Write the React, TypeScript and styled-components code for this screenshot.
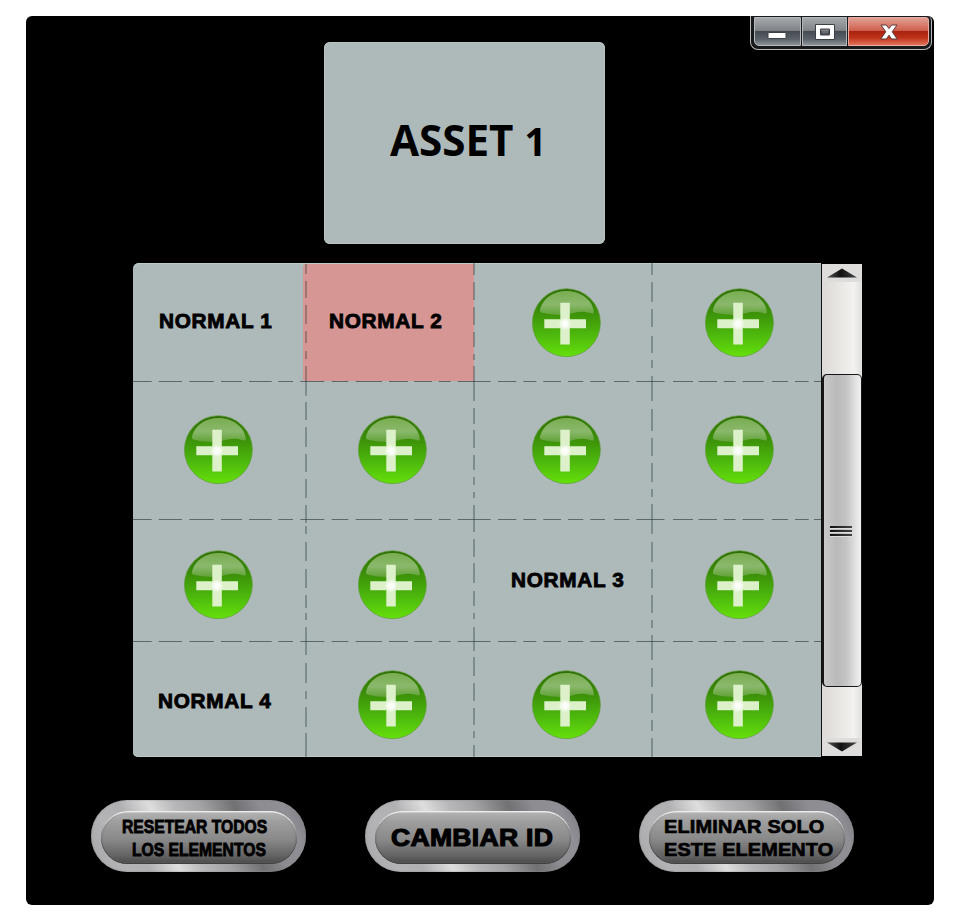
import React from "react";
import styled, { createGlobalStyle } from "styled-components";

const GlobalStyle = createGlobalStyle`
  *, *::before, *::after { box-sizing: border-box; }
  body { margin: 0; background: #fff; font-family: "Liberation Sans", Arial, sans-serif; }
  button { border: 0; padding: 0; margin: 0; background: none; font: inherit; color: inherit; cursor: pointer; }
`;

const PANEL = "#aeb9ba";

const Page = styled.main`
  width: 960px;
  height: 920px;
  padding: 16px 0 0 26px;
  overflow: hidden;
`;

const Window = styled.section`
  width: 908px;
  height: 889px;
  background: #000;
  border-radius: 6px;
  display: flex;
  flex-direction: column;
`;

const Header = styled.header`
  display: grid;
  grid-template-columns: 298px 281px 1fr;
  height: 227px;
`;

const AssetCard = styled.div`
  grid-column: 2;
  margin-top: 26px;
  height: 202px;
  border-radius: 6px;
  background: ${PANEL};
  box-shadow: inset 0 0 1px 1px #bcc4c4;
  padding: 68px 0 0 66px;
`;

const AssetTitle = styled.h1`
  margin: 0;
  width: max-content;
  font: 700 43px/60px "Open Sans", "Noto Sans", sans-serif;
  color: #000;
  white-space: pre;
  transform: scaleX(0.98);
  transform-origin: left;
  small { font-size: 39px; }
`;

const Controls = styled.div`
  justify-self: end;
  display: flex;
  gap: 1.5px;
  width: 182px;
  height: 34px;
  margin-right: 2px;
  padding: 1px 2px 3px 3px;
  background: #17191c;
  border: 1px solid #b9b9b9;
  border-top: 0;
  border-radius: 0 5px 8px 8px;
`;

const controlFill = {
  gray: "linear-gradient(#a5a8ab 0%, #808488 46%, #454b51 50%, #5a6168 78%, #8b9298 100%)",
  red: "linear-gradient(#e0a093 0%, #d0604e 46%, #a92410 50%, #bd3018 72%, #e0705a 100%)",
};

const ControlButton = styled.button<{ $tone: keyof typeof controlFill; $width: number; $radius: string }>`
  width: ${(p) => p.$width}px;
  height: 29px;
  display: grid;
  place-items: center;
  background: ${(p) => controlFill[p.$tone]};
  border: 1px solid ${(p) => (p.$tone === "red" ? "#e8aca0" : "#b4b8bb")};
  border-radius: ${(p) => p.$radius};
  svg { display: block; }
`;

const Board = styled.section`
  display: flex;
  height: 494px;
  margin: 20px 0 0 107px;
`;

const Grid = styled.div`
  position: relative;
  display: grid;
  grid-template-columns: 173px 168px 178px 169px;
  grid-template-rows: 118px 138px 122px 116px;
  background: ${PANEL};
  border-radius: 6px 0 0 5px;
  box-shadow: inset 0 1px 0 #c2cbcb, inset 0 -1px 0 #c2cbcb;
`;

const Cell = styled.div<{ $left: number; $top: number }>`
  position: relative;
  padding: ${(p) => p.$top}px 0 0 ${(p) => p.$left}px;
`;

const Selection = styled.div`
  position: absolute;
  inset: 1px 0 0 -3px;
  background: #d69694;
  border-radius: 4px 1px 1px 3px;
`;

const Label = styled.span<{
  $size: number;
  $scale: number;
  $line: number;
  $stroke?: number;
  $indent?: number;
  $spacing?: number;
}>`
  position: relative;
  display: block;
  width: max-content;
  margin-left: ${(p) => p.$indent ?? 0}px;
  font-weight: 700;
  font-size: ${(p) => p.$size}px;
  line-height: ${(p) => p.$line}px;
  letter-spacing: ${(p) => p.$spacing ?? 0}px;
  color: #000;
  white-space: pre;
  -webkit-text-stroke: ${(p) => p.$stroke ?? 0.9}px #000;
  transform: scaleX(${(p) => p.$scale});
  transform-origin: left;
`;

const AddButton = styled.button`
  display: block;
  width: 69px;
  height: 70px;
  svg { display: block; }
`;

const Dashes = styled.svg`
  position: absolute;
  inset: 0;
  pointer-events: none;
`;

const Scrollbar = styled.div`
  width: 41px;
  height: 492px;
  margin-top: 1px;
  border-left: 1px solid #111;
  background: linear-gradient(90deg, #dcd9d6, #e9e7e4 45%, #f3f2f0 80%, #dededc);
  display: flex;
  flex-direction: column;
  justify-content: space-between;
`;

const ScrollArrow = styled.button<{ $down?: boolean }>`
  height: 18px;
  display: flex;
  justify-content: center;
  align-items: center;
  background: #dfdddb;
  transform: ${(p) => (p.$down ? "scaleY(-1)" : "none")};
`;

const Track = styled.div`
  flex: 1;
  padding: 92px 0 0;
`;

const Thumb = styled.div`
  height: 313px;
  border: 1.5px solid #161616;
  border-left-width: 2px;
  border-radius: 5px;
  background: linear-gradient(90deg, #c9c9c9, #b9b9b9 35%, #c4c4c4 60%, #ededed 95%);
  display: flex;
  flex-direction: column;
  align-items: center;
  gap: 2px;
  padding: 151px 3px 0 0;
`;

const Grip = styled.i`
  width: 22px;
  height: 2px;
  flex: none;
  background: linear-gradient(90deg, #111, #444);
  box-shadow: 0 1px 0 #dedede;
`;

const Actions = styled.footer`
  display: flex;
  gap: 59px;
  margin: 43px 0 0 64.5px;
`;

const MetalButton = styled.button`
  width: 215px;
  height: 72px;
  padding: 11px 9px 8px 10px;
  border-radius: 36px;
  text-align: left;
  background: linear-gradient(65deg, #a6a6a9 0%, #b4b4b6 14%, #b0b0b3 24%, #dedede 36%, #b8b8ba 46%, #a2a2a4 57%, #717174 70%, #8c8c91 80%, #8f8f95 90%, #77777c 100%);
  box-shadow: inset 0 0 2px #8c8c8c;
`;

const MetalFace = styled.span<{ $left: number; $top: number }>`
  display: block;
  height: 53px;
  padding: ${(p) => p.$top}px 0 0 ${(p) => p.$left}px;
  border-radius: 27px;
  background: linear-gradient(#b5b5b5 0%, #9e9e9e 20%, #888 55%, #626262 85%, #484848 100%);
  box-shadow: inset 0 2px 1px -0.5px #f2f2f2, inset 0 -1px 1px #3c3c3c, inset 0 0 2px 1px #777;
`;

type Segments = [number, number][];

const rowDashes: Segments = [
  [0, 18.7], [25.7, 49], [56.3, 80.7], [88, 109], [116, 138.7], [145.3, 160], [167.3, 191.3],
  [198.7, 215.3], [222.7, 249], [256, 275], [281.3, 299], [305.7, 317.7], [324.7, 357.7],
  [365, 383.3], [390.3, 403.3], [410.3, 428], [435, 450.3], [457.3, 472], [481, 496.3],
  [503.3, 531.5], [540, 560], [565.5, 584], [590.7, 602.6], [609.6, 630.7], [639, 655], [662, 675.6], [681, 688],
];

const columns: { x: number; dashes: Segments }[] = [
  {
    x: 173,
    dashes: [
      [1, 11], [18, 35], [42, 61], [68, 80], [88, 96], [103, 132.7], [139, 157], [164, 184], [191, 209],
      [216, 235], [242, 260], [263, 271], [279, 298], [306, 325], [332, 345], [350, 357], [364, 392],
      [400, 420], [428, 436], [444, 464], [470, 494],
    ],
  },
  {
    x: 341,
    dashes: [
      [0, 12], [19, 37], [44, 62], [69, 84], [91, 97], [103, 138], [145, 161], [167, 185], [192, 207],
      [214, 222], [229, 235], [242, 269], [276, 294], [300, 320], [328, 343], [350, 356], [364, 388],
      [394, 413], [420, 438], [445, 462], [468, 475], [482, 494],
    ],
  },
  {
    x: 519,
    dashes: [
      [0, 12], [19, 39], [46, 64], [73, 90], [97, 105], [113, 138], [146, 168], [175, 193], [200, 219],
      [226, 234], [241, 271], [279, 299], [306, 325], [332, 350], [357, 365], [372, 397], [405, 424],
      [431, 450], [457, 468], [475, 494],
    ],
  },
];

const GridDashes = () => (
  <Dashes width="688" height="494" viewBox="0 0 688 494" stroke="#283638" strokeOpacity="0.62" strokeWidth="1.1" fill="none">
    {[118.5, 256.5, 378.5].map((y) => (
      <path key={y} d={rowDashes.map(([a, b]) => `M${a} ${y}H${b}`).join("")} />
    ))}
    {columns.map(({ x, dashes }) => (
      <path key={x} d={dashes.map(([a, b]) => `M${x} ${a}V${b}`).join("")} />
    ))}
  </Dashes>
);

const HiddenDefs = styled.svg`
  position: absolute;
`;

const GlossDefs = () => (
  <HiddenDefs width="0" height="0" aria-hidden>
    <defs>
      <linearGradient id="ball" x1="0" y1="0" x2="0" y2="1">
        <stop offset="0" stopColor="#2f6d06" />
        <stop offset="0.38" stopColor="#3d9409" />
        <stop offset="0.65" stopColor="#4bb50c" />
        <stop offset="1" stopColor="#65e00c" />
      </linearGradient>
      <linearGradient id="gloss" x1="0" y1="0" x2="0" y2="1">
        <stop offset="0" stopColor="#79ad50" />
        <stop offset="0.55" stopColor="#8ab86c" />
        <stop offset="1" stopColor="#62a337" />
      </linearGradient>
      <radialGradient id="core">
        <stop offset="0" stopColor="#fff" />
        <stop offset="0.5" stopColor="#fff" stopOpacity="0.8" />
        <stop offset="1" stopColor="#fff" stopOpacity="0" />
      </radialGradient>
    </defs>
  </HiddenDefs>
);

const PlusButton = () => (
  <AddButton aria-label="+">
    <svg width="69" height="70" viewBox="0 0 69 70">
      <circle cx="34.4" cy="34.7" r="34" fill="url(#ball)" stroke="#5f9c3a" strokeWidth="0.7" />
      <path
        d="M34.4 3C50 3 61 13.5 61.8 23.5C62 26.5 60 25.6 57 24.7C49 22.5 43 25 36 26.2C26 28 15 26 9.5 24.5C7.500 24 7.8 22 8.3 20.5C11.5 10 22 3 34.4 3Z"
        fill="url(#gloss)"
      />
      <path d="M28.3 14.8H37.8V31.2H54V40.3H37.8V56.6H28.3V40.3H12.3V31.2H28.3Z" fill="#dcf1c9" />
      <circle cx="33" cy="35.8" r="6.5" fill="url(#core)" />
    </svg>
  </AddButton>
);

const plusLeft = [51, 52, 58, 53];
const plusTop = [25, 34, 31, 29];

interface NamedCell {
  text: string;
  left: number;
  top: number;
  selected?: boolean;
}

const named: Record<string, NamedCell> = {
  "0-0": { text: "NORMAL 1", left: 25.5, top: 47.5 },
  "0-1": { text: "NORMAL 2", left: 23, top: 47.5, selected: true },
  "2-2": { text: "NORMAL 3", left: 37, top: 50.5 },
  "3-0": { text: "NORMAL 4", left: 24.5, top: 50 },
};

const ArrowIcon = () => (
  <svg width="32" height="10" viewBox="0 0 32 10">
    <defs>
      <linearGradient id="arrow">
        <stop offset="0" stopColor="#555" />
        <stop offset="0.45" stopColor="#111" />
        <stop offset="1" stopColor="#444" />
      </linearGradient>
    </defs>
    <path d="M16 0.5L31 9.5H1Z" fill="url(#arrow)" />
  </svg>
);

export default function App() {
  return (
    <Page>
      <GlobalStyle />
      <GlossDefs />
      <Window>
        <Header>
          <AssetCard>
            <AssetTitle>
              ASSET <small>1</small>
            </AssetTitle>
          </AssetCard>
          <Controls>
            <ControlButton $tone="gray" $width={47} $radius="0 0 0 5px">
              <svg width="22" height="20" viewBox="0 0 22 20">
                <rect x="2" y="10.5" width="18" height="6" rx="1" fill="#fff" stroke="#3c4146" />
              </svg>
            </ControlButton>
            <ControlButton $tone="gray" $width={45} $radius="0">
              <svg width="22" height="20" viewBox="0 0 22 20">
                <path
                  d="M1.5 2.5H20.5V17.5H1.5ZM6.5 7V13H15.5V7Z"
                  fill="#fff"
                  fillRule="evenodd"
                  stroke="#3c4146"
                />
                <path d="M8 10H14" stroke="#8b9096" />
              </svg>
            </ControlButton>
            <ControlButton $tone="red" $width={81} $radius="0 3px 5px 0">
              <svg width="20" height="20" viewBox="0 0 20 20">
                <path
                  d="M2 3H7.3L10 6.6L12.7 3H18L13.2 9.8L18.2 17H12.6L10 13.2L7.4 17H1.8L6.8 9.8Z"
                  fill="#fff"
                  stroke="#5b3a3c"
                  strokeLinejoin="round"
                />
              </svg>
            </ControlButton>
          </Controls>
        </Header>

        <Board>
          <Grid>
            {plusTop.map((top, r) =>
              plusLeft.map((left, c) => {
                const item = named[`${r}-${c}`];
                return (
                  <Cell key={`${r}-${c}`} $left={item?.left ?? left} $top={item?.top ?? top}>
                    {item?.selected && <Selection />}
                    {item ? (
                      <Label $size={19.5} $line={20} $scale={1.065} $spacing={0.65} $stroke={0.8}>
                        {item.text}
                      </Label>
                    ) : (
                      <PlusButton />
                    )}
                  </Cell>
                );
              })
            )}
            <GridDashes />
          </Grid>
          <Scrollbar>
            <ScrollArrow>
              <ArrowIcon />
            </ScrollArrow>
            <Track>
              <Thumb>
                <Grip />
                <Grip />
                <Grip />
              </Thumb>
            </Track>
            <ScrollArrow $down>
              <ArrowIcon />
            </ScrollArrow>
          </Scrollbar>
        </Board>

        <Actions>
          <MetalButton>
            <MetalFace $left={21} $top={4}>
              <Label $size={19} $line={23} $scale={0.825}>RESETEAR TODOS</Label>
              <Label $size={19} $line={23} $scale={0.825} $indent={10}>LOS ELEMENTOS</Label>
            </MetalFace>
          </MetalButton>
          <MetalButton>
            <MetalFace $left={16} $top={12}>
              <Label $size={23.5} $line={30} $scale={1.13} $spacing={0.25} $stroke={1.1}>CAMBIAR ID</Label>
            </MetalFace>
          </MetalButton>
          <MetalButton>
            <MetalFace $left={15} $top={4}>
              <Label $size={19} $line={23} $scale={1.05} $spacing={0.15} $stroke={0.7}>ELIMINAR SOLO</Label>
              <Label $size={19} $line={23} $scale={1.045} $spacing={0.15} $stroke={0.7}>ESTE ELEMENTO</Label>
            </MetalFace>
          </MetalButton>
        </Actions>
      </Window>
    </Page>
  );
}
